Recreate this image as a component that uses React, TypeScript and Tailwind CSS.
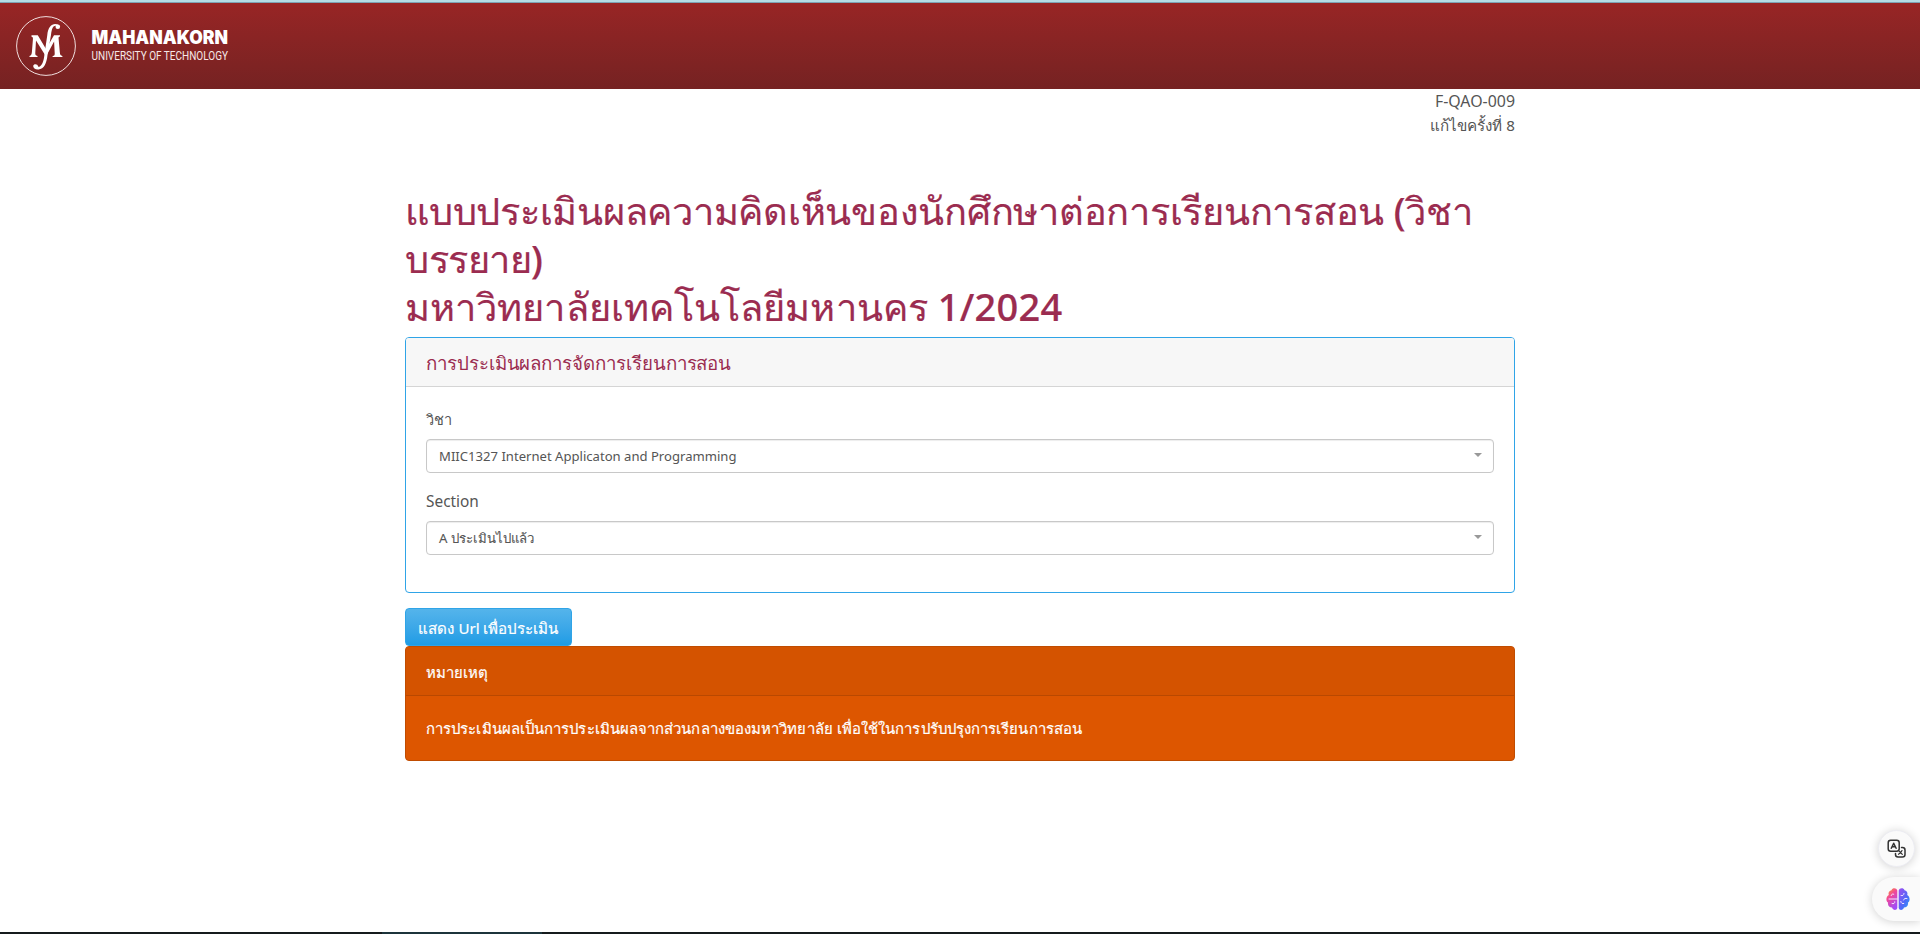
import React from "react";

function Logo() {
  return (
    <div className="flex items-center pt-[13px] pl-[16px]">
      <svg width="60" height="60" viewBox="0 0 60 60" fill="none" className="shrink-0">
        <circle cx="30" cy="30" r="29.400" stroke="#f0dede" strokeWidth="1" />
        <path d="M15.500 19.300h6.300L30 33l8-13.700h6v1.200c-1.500.3-1.500 1-1.400 2l1.200 13.500c.2 2.800.8 3.600 2.600 3.900V41H36.600v-1.100c2-.3 2.200-1 2.100-3l-.6-11.400L30 40.500 20 24.500l-.7 12c-.1 2.300.2 3.100 2.200 3.400V41H13.500v-1.100c1.600-.4 2.200-1.500 2.400-3.900l1-12.500c.1-1.900 0-2.600-1.400-2.800z" fill="#fff" />
        <path d="M42.300 8.700C37.500 6.200 32 9.500 31.300 19L28.500 38c-.7 7-2.300 12.700-6.500 13l.3 2.400C28 53.500 30.700 47 31.500 39L35 19c.8-7 2.300-10 6-9z" fill="#fff" />
        <circle cx="41.800" cy="10.800" r="2.300" fill="#fff" />
        <path d="M23 53.300c-3 .6-6-1-5.800-3.300.2-1.800 2.500-2.400 4-1.200 1 .8.600 2.200 1.800 2.300z" fill="#fff" />
      </svg>
      <div className="mb-[2px] ml-[16px] flex flex-col whitespace-nowrap">
        <div className="h-[18px] font-[Inter,sans-serif] text-[18px] font-black leading-[18px] text-white">
          <svg width="137" height="18" viewBox="0 0 137 18" className="block overflow-visible" fill="#fff">
            <text x="-0.500" y="15.200" fontSize="18.300" textLength="136.500" lengthAdjust="spacingAndGlyphs">MAHANAKORN</text>
          </svg>
        </div>
        <div className="h-[14px] font-[Roboto,sans-serif] font-normal">
          <svg width="137" height="14" viewBox="0 0 137 14" className="block overflow-visible" fill="#f6e8e8">
            <text x="-0.500" y="12.600" fontSize="12" textLength="136.500" lengthAdjust="spacingAndGlyphs">UNIVERSITY OF TECHNOLOGY</text>
          </svg>
        </div>
      </div>
    </div>
  );
}

function Select({ children }: { children: React.ReactNode }) {
  return (
    <div className="flex h-[34px] items-center justify-between rounded-[4px] border border-[#c8c8c8] bg-white pl-[12px] pr-[11px] shadow-[inset_0_1px_1px_rgba(0,0,0,0.075)]">
      {children}
      <svg width="8" height="4" viewBox="0 0 8 4" className="mb-[2px]"><path d="M0 0h8L4 4z" fill="#999" /></svg>
    </div>
  );
}

function TranslateIcon() {
  return (
    <svg width="20" height="20" viewBox="0 0 20 20" fill="none" stroke="#333" strokeWidth="1.500" strokeLinecap="round" strokeLinejoin="round">
      <rect x="1.200" y="1.200" width="11" height="11" rx="2.500" />
      <path d="M4.300 9.300 6.700 4.300l2.400 5M5.300 7.800h2.900" />
      <path d="M14.500 8.500h1a2.500 2.500 0 0 1 2.500 2.500v4.500a2.500 2.500 0 0 1-2.500 2.500H11a2.500 2.500 0 0 1-2.500-2.500v-1" />
      <path d="M15 11.500c-.8 2-2 3-3.500 3.800M12.500 12.500l2.800 2.800" strokeWidth="1.200" />
    </svg>
  );
}

function BrainIcon() {
  return (
    <svg width="24" height="24" viewBox="0 0 24 24">
      <defs>
        <linearGradient id="left" x1="0" y1="0" x2="0.500" y2="1">
          <stop offset="0" stopColor="#ffa51f" /><stop offset="0.450" stopColor="#f0479b" /><stop offset="1" stopColor="#a34cf5" />
        </linearGradient>
        <linearGradient id="right" x1="0" y1="0" x2="1" y2="1">
          <stop offset="0" stopColor="#a04df0" /><stop offset="0.600" stopColor="#4d6bf8" /><stop offset="1" stopColor="#28a8f5" />
        </linearGradient>
      </defs>
      <path d="M11.300 3.500C10.500.8 6.500.5 5.500 3.200 3 3.500 2 6 2.800 8-.2 9.500-.3 14 2 15.500c-.5 3 1.500 5 4 5 .8 3 4.800 3.200 5.300.4z" fill="url(#left)" />
      <path d="M12.700 3.500c.8-2.700 4.800-3 5.800-.3 2.500.3 3.500 2.800 2.700 4.800 3 1.500 3.100 6 .8 7.500.5 3-1.500 5-4 5-.8 3-4.800 3.200-5.300.4z" fill="url(#right)" />
      <path d="M5.200 8.500C5.500 6.800 7 6.800 7.800 7.300M3 12h8.300M6 16.500c1.500.8 3-.2 2.800-1.700M18 6.500c-.2 2-1.500 2.500-3 2M21 11.500c-1.500-.5-3 0-3.500 1.500M14.800 14.500c.2 1.800 1.700 2.500 3 2" stroke="#f6e8ff" strokeWidth="1" fill="none" strokeLinecap="round" />
    </svg>
  );
}

export default function App() {
  return (
    <div className="relative flex h-[934px] w-full flex-col overflow-hidden bg-white font-['Noto_Sans',sans-serif] text-[15px] leading-[24px] text-[#555]">
      <div className="h-[3px] shrink-0 border-b border-[#7fa3b3] bg-[#b5dde6]" />
      <header className="h-[86px] shrink-0 bg-linear-to-b from-[#982525] to-[#752222]">
        <Logo />
      </header>
      <main className="mx-auto flex w-[1110px] flex-col">
        <div className="flex h-[48px] flex-col items-end">
          <span className="text-[15.900px]">F-QAO-009</span>
          <span className="text-[15.200px]">แก้ไขครั้งที่ 8</span>
        </div>
        <h1 className="mt-[49px] mb-[2px] whitespace-nowrap text-[38px] font-medium leading-[48px] text-[#9b2c50] [-webkit-text-stroke:0.200px_#9b2c50]">
          <span className="block tracking-[-0.250px]">แบบประเมินผลความคิดเห็นของนักศึกษาต่อการเรียนการสอน (วิชา</span>
          <span className="block tracking-[-0.500px]">บรรยาย)</span>
          <span className="block tracking-[0.080px]">มหาวิทยาลัยเทคโนโลยีมหานคร <span className="tracking-[0.200px]">1/2024</span></span>
        </h1>
        <section className="mt-[5px] h-[256px] rounded-[4px] border border-[#2fa4e7] bg-white">
          <h4 className="flex h-[49px] items-center rounded-t-[3px] border-b border-[#d5d5d5] bg-[#f7f7f7] pt-[2px] pl-[20px] text-[18.700px] tracking-[-0.060px] text-[#9b2c50]">
            <span>การประเมินผลการจัดการเรียนการสอน</span>
          </h4>
          <div className="flex flex-col px-[20px] pt-[20px]">
            <label className="mb-[8px] text-[14.500px]">วิชา</label>
            <Select><span className="whitespace-nowrap text-[13.100px]">MIIC1327 Internet Applicaton and Programming</span></Select>
            <label className="mt-[17px] mb-[7px] text-[15.400px]">Section</label>
            <Select><span className="whitespace-nowrap text-[13.200px] [-webkit-text-stroke:0.100px_#555]">A ประเมินไปแล้ว</span></Select>
          </div>
        </section>
        <button className="mt-[15px] h-[38px] w-[167px] rounded-[4px] border border-[#2fa4e7] bg-linear-to-b from-[#54b4eb] to-[#1d9ce5] pt-px whitespace-nowrap text-[15.100px] text-white [-webkit-text-stroke:0.200px_white]">
          แสดง Url เพื่อประเมิน
        </button>
        <section className="h-[115px] rounded-[4px] border border-[#c04c00] bg-[#dd5600] text-[14.900px] tracking-[0.080px] text-white [-webkit-text-stroke:0.200px_white]">
          <div className="flex h-[49px] items-center rounded-t-[3px] border-b border-[#b94800] bg-[#d45300] pt-px pl-[20px]">หมายเหตุ</div>
          <div className="px-[20px] pt-[20px] whitespace-nowrap">การประเมินผลเป็นการประเมินผลจากส่วนกลางของมหาวิทยาลัย เพื่อใช้ในการปรับปรุงการเรียนการสอน</div>
        </section>
      </main>
      <div className="absolute top-[830px] right-[5px] flex size-[37px] items-center justify-center rounded-full border border-[#ececf2] bg-[#fafafa] shadow-[0_1px_10px_rgba(0,0,0,0.18)]"><TranslateIcon /></div>
      <div className="absolute top-[877px] right-0 flex h-[44px] w-[48px] items-center rounded-l-full bg-[#fafafa] pl-[14px] shadow-[0_1px_10px_rgba(0,0,0,0.18)]"><BrainIcon /></div>
      <div className="absolute bottom-0 left-0 flex h-[2px] w-full bg-[#151b1d]"><div className="ml-[382px] w-[160px] bg-[#1c343b]" /></div>
    </div>
  );
}
